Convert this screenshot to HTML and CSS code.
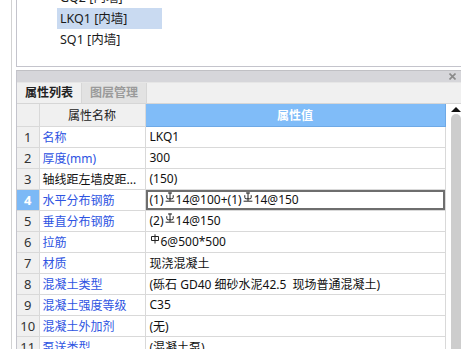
FILE: index.html
```html
<!DOCTYPE html>
<html lang="zh">
<head>
<meta charset="utf-8">
<link rel="stylesheet" href="styles.css">
</head>
<body>
<div class="frame">
  <div class="listbox">
    <ul class="list">
      <li class="item">GQ2 [内墙]</li>
      <li class="item selected">LKQ1 [内墙]</li>
      <li class="item">SQ1 [内墙]</li>
    </ul>
  </div>
  <div class="panel">
    <div class="titlebar">
      <svg class="close" width="7" height="7" viewBox="0 0 7 7"><path d="M0.5 0.5L6.5 6.5M6.5 0.5L0.5 6.5" stroke="#8a8a8a" stroke-width="1.6"/></svg>
    </div>
    <div class="tabs">
      <div class="tab active">属性列表</div>
      <div class="tab">图层管理</div>
    </div>
    <div class="body">
      <table class="grid">
        <colgroup><col class="c-num"><col class="c-name"><col class="c-val"></colgroup>
        <thead>
          <tr><th class="num"></th><th class="hname">属性名称</th><th class="hval">属性值</th></tr>
        </thead>
        <tbody>
          <tr><td class="num">1</td><td class="name">名称</td><td class="val">LKQ1</td></tr>
          <tr><td class="num">2</td><td class="name">厚度(mm)</td><td class="val">300</td></tr>
          <tr><td class="num">3</td><td class="name plain">轴线距左墙皮距...</td><td class="val">(150)</td></tr>
          <tr class="cur"><td class="num">4</td><td class="name">水平分布钢筋</td><td class="val edit">(1)<svg class="bar" width="10" height="10" viewBox="0 0 10 10"><path d="M3 1H7M5 0.5V9M1.8 3.2V5.4Q1.8 6.8 3.2 6.8H6.8Q8.2 6.8 8.2 5.4V3.2M0.6 9.2H9.4" fill="none" stroke="#222" stroke-width="1"/></svg>14@100+(1)<svg class="bar" width="10" height="10" viewBox="0 0 10 10"><path d="M3 1H7M5 0.5V9M1.8 3.2V5.4Q1.8 6.8 3.2 6.8H6.8Q8.2 6.8 8.2 5.4V3.2M0.6 9.2H9.4" fill="none" stroke="#222" stroke-width="1"/></svg>14@150</td></tr>
          <tr><td class="num">5</td><td class="name">垂直分布钢筋</td><td class="val">(2)<svg class="bar" width="10" height="10" viewBox="0 0 10 10"><path d="M3 1H7M5 0.5V9M1.8 3.2V5.4Q1.8 6.8 3.2 6.8H6.8Q8.2 6.8 8.2 5.4V3.2M0.6 9.2H9.4" fill="none" stroke="#222" stroke-width="1"/></svg>14@150</td></tr>
          <tr><td class="num">6</td><td class="name">拉筋</td><td class="val"><svg class="bar first" width="10" height="10" viewBox="0 0 10 10"><path d="M1.5 2.5H8.5V6.5H1.5ZM5 0.3V9.5" fill="none" stroke="#222" stroke-width="1"/></svg>6@500*500</td></tr>
          <tr><td class="num">7</td><td class="name">材质</td><td class="val">现浇混凝土</td></tr>
          <tr><td class="num">8</td><td class="name">混凝土类型</td><td class="val">(砾石 GD40 细砂水泥42.5&nbsp; 现场普通混凝土)</td></tr>
          <tr><td class="num">9</td><td class="name">混凝土强度等级</td><td class="val">C35</td></tr>
          <tr><td class="num">10</td><td class="name">混凝土外加剂</td><td class="val">(无)</td></tr>
          <tr><td class="num">11</td><td class="name">泵送类型</td><td class="val">(混凝土泵)</td></tr>
        </tbody>
      </table>
      <div class="scroll">
        <div class="arrow"></div>
        <div class="thumb"></div>
      </div>
    </div>
  </div>
</div>
</body>
</html>
```
FILE: styles.css
```css
* { box-sizing: border-box; }
html, body {
  margin: 0;
  padding: 0;
  background: #fff;
  width: 461px;
  height: 349px;
  overflow: hidden;
}
body {
  font-family: "Noto Sans", "Noto Sans CJK SC", sans-serif;
  font-size: 12px;
  color: #111;
}
.frame {
  margin-left: 11px;
  border-left: 1px solid #d2d2d2;
  padding-left: 4px;
  height: 349px;
  display: flex;
  flex-direction: column;
}
.listbox {
  height: 67px;
  border-left: 1px solid #c4c4cc;
  border-bottom: 1px solid #c4c4cc;
  overflow: hidden;
  flex: none;
}
.list {
  list-style: none;
  margin: -13px 0 0 40px;
  padding: 0;
}
.item {
  width: 105px;
  height: 21px;
  line-height: 21px;
  padding-left: 3px;
  color: #1a1a1a;
  font-size: 12.5px;
}
.item.selected { background: #c9daf1; }
.panel {
  margin-top: 3px;
  flex: 1;
  border-left: 1px solid #c4c4cc;
  border-top: 1px solid #c0c0c4;
  display: flex;
  flex-direction: column;
  overflow: hidden;
}
.titlebar {
  height: 11px;
  background: #d6d6da;
  display: flex;
  justify-content: flex-end;
  align-items: center;
  padding-right: 5px;
  flex: none;
}
.tabs {
  height: 22px;
  background: #f0f0f0;
  border-top: 1px solid #e6e6e6;
  border-bottom: 1px solid #d6d6d6;
  display: flex;
  flex: none;
}
.tab {
  width: 65px;
  text-align: center;
  line-height: 20px;
  font-weight: bold;
  color: #9a9a9a;
  background: #e2e2e2;
  border-right: 1px solid #d6d6d6;
}
.tab.active {
  color: #222;
  background: #f0f0f0;
}
.body {
  flex: 1;
  display: flex;
  overflow: hidden;
}
.grid {
  border-collapse: collapse;
  table-layout: fixed;
  width: 428px;
  flex: none;
  align-self: flex-start;
}
.c-num { width: 22px; }
.c-name { width: 106px; }
.c-val { width: 300px; }
.grid th, .grid td {
  height: 21px;
  padding: 0;
  border: 1px solid #d9d9d9;
  white-space: nowrap;
  overflow: hidden;
  font-weight: normal;
}
.grid tr > :first-child { border-left: none; }
.grid thead th { border-top: none; height: 22px; }
.num {
  background: #f0f0f0;
  text-align: center;
  color: #333;
  font-size: 13px;
}
.hname {
  background: #f0f0f0;
  text-align: center;
  color: #222;
}
.hval {
  background: #80bcf8;
  border-color: #6ea9e6 !important;
  color: #fff;
  font-weight: bold !important;
  text-align: center;
}
.name {
  color: #2e54e2;
  padding-left: 3px !important;
}
.name.plain { color: #111; }
.val {
  padding-left: 4px !important;
  color: #111;
}
.cur .num {
  background: #7cb9f6;
  color: #fff;
  font-weight: bold;
}
.val.edit {
  box-shadow: inset 0 0 0 2px #6e6e6e;
}
.bar {
  vertical-align: 2px;
  margin: 0 1px 0 1px;
}
.bar.first { margin-left: 0; }
.scroll {
  flex: 1;
  position: relative;
}
.arrow {
  position: absolute;
  left: 5px;
  top: 3px;
  width: 0;
  height: 0;
  border-left: 5px solid transparent;
  border-right: 5px solid transparent;
  border-bottom: 5px solid #111;
}
.thumb {
  position: absolute;
  left: 5px;
  top: 10px;
  width: 10px;
  bottom: 0;
  background: #cdcdcd;
  border-radius: 5px 5px 0 0;
}
```
